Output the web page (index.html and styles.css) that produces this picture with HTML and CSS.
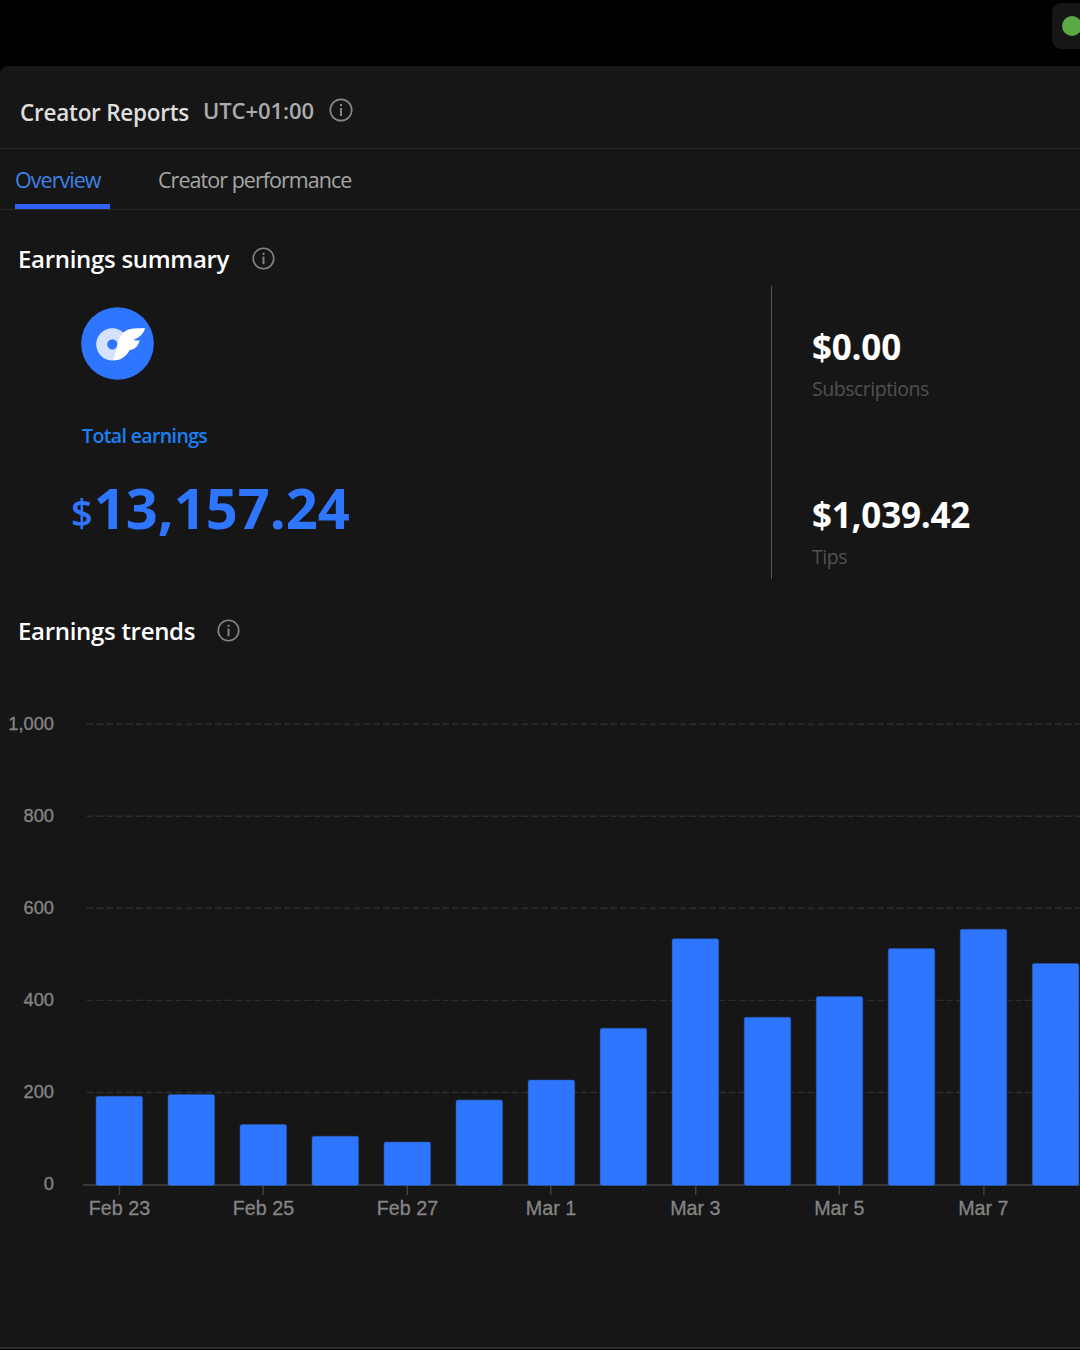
FILE: index.html
```html
<!DOCTYPE html>
<html lang="en">
<head>
  <meta charset="UTF-8" />
  <meta name="viewport" content="width=device-width, initial-scale=1.0"/>
  <title>Creator Reports</title>
  <link rel="stylesheet" href="styles.css">
</head>
<body>

  <svg class="defs" width="0" height="0">
    <symbol id="info" viewBox="0 0 24 24">
      <circle cx="12" cy="12" r="10.7" fill="none" stroke="currentColor" stroke-width="1.7"/>
      <rect x="11" y="6" width="2" height="2.2" fill="currentColor"/>
      <rect x="11" y="10" width="2" height="8" fill="currentColor"/>
    </symbol>
  </svg>

  <div class="topbar">
    <div class="status-pill"><span class="status-dot"></span></div>
  </div>

  <main class="panel">
    <header class="panel-header">
      <h1>Creator Reports</h1>
      <span class="timezone">UTC+01:00</span>
      <svg class="info info-lg"><use href="#info"/></svg>
    </header>

    <nav class="tabs">
      <a class="tab active">Overview</a>
      <a class="tab">Creator performance</a>
    </nav>

    <section class="summary">
      <div class="section-title">
        <h2>Earnings summary</h2>
        <svg class="info"><use href="#info"/></svg>
      </div>
      <div class="summary-body">
        <div class="total">
          <svg class="logo" viewBox="64 51 219 219">
            <circle cx="173.500" cy="160.500" r="109" fill="#2e76ff"/>
            <circle cx="158" cy="163" r="32" fill="none" stroke="#d5e3ff" stroke-width="33"/>
            <path d="M161 211 C166 198 169 180 173 166 C179 140 190 121 212 117 C226 114 240 116 256 114 C253 130 240 143 222 149 C228 152 233 152 240 151 C236 168 226 179 210 180 C202 196 185 212 161 211 Z" fill="#fff"/>
          </svg>
          <p class="total-label">Total earnings</p>
          <p class="total-value"><span class="currency">$</span>13,157.24</p>
        </div>
        <div class="breakdown">
          <div class="stat">
            <p class="stat-value">$0.00</p>
            <p class="stat-label">Subscriptions</p>
          </div>
          <div class="stat">
            <p class="stat-value">$1,039.42</p>
            <p class="stat-label">Tips</p>
          </div>
        </div>
      </div>
    </section>

    <section class="trends">
      <div class="section-title">
        <h2 class="trends-title">Earnings trends</h2>
        <svg class="info"><use href="#info"/></svg>
      </div>
      <svg class="chart" viewBox="0 680 1080 560">
        <g class="grid">
          <path d="M86.500 724.300H1080"/>
          <path d="M86.500 816.300H1080"/>
          <path d="M86.500 908.300H1080"/>
          <path d="M86.500 1000.400H1080"/>
          <path d="M86.500 1092.500H1080"/>
        </g>
        <path class="axis" d="M83 1185H1080"/>
        <path class="ticks" d="M119.500 1185v10M263.100 1185v10M407.300 1185v10M550.800 1185v10M695.700 1185v10M839.200 1185v10M983.900 1185v10"/>
        <g class="bars">
          <rect x="96" y="1096.300" width="46.600" height="89.200" rx="2"/>
          <rect x="168" y="1094.500" width="46.600" height="91" rx="2"/>
          <rect x="240" y="1124.500" width="46.600" height="61" rx="2"/>
          <rect x="312" y="1136.200" width="46.600" height="49.300" rx="2"/>
          <rect x="384" y="1142" width="46.600" height="43.500" rx="2"/>
          <rect x="456" y="1100" width="46.600" height="85.500" rx="2"/>
          <rect x="528.100" y="1080" width="46.600" height="105.500" rx="2"/>
          <rect x="600.100" y="1028.200" width="46.600" height="157.300" rx="2"/>
          <rect x="672.100" y="938.700" width="46.600" height="246.800" rx="2"/>
          <rect x="744.200" y="1017.300" width="46.600" height="168.200" rx="2"/>
          <rect x="816.200" y="996.600" width="46.600" height="188.900" rx="2"/>
          <rect x="888.200" y="948.600" width="46.600" height="236.900" rx="2"/>
          <rect x="960.200" y="929.300" width="46.600" height="256.200" rx="2"/>
          <rect x="1032.300" y="963.500" width="46.600" height="222" rx="2"/>
        </g>
        <g class="y-labels">
          <text x="54" y="729.500">1,000</text>
          <text x="54" y="821.500">800</text>
          <text x="54" y="913.700">600</text>
          <text x="54" y="1005.800">400</text>
          <text x="54" y="1097.700">200</text>
          <text x="54" y="1189.700">0</text>
        </g>
        <g class="x-labels">
          <text x="119.500" y="1215">Feb 23</text>
          <text x="263.500" y="1215">Feb 25</text>
          <text x="407.500" y="1215">Feb 27</text>
          <text x="551" y="1215">Mar 1</text>
          <text x="695.300" y="1215">Mar 3</text>
          <text x="839.300" y="1215">Mar 5</text>
          <text x="983.300" y="1215">Mar 7</text>
        </g>
      </svg>
    </section>
  </main>

</body>
</html>
```

FILE: styles.css
```css
* { box-sizing: border-box; }
body {
  margin: 0;
  height: 1350px;
  overflow: hidden;
  background: #000;
  color: #fff;
  font-family: "Open Sans", "Noto Sans", sans-serif;
}
h1, h2, p { margin: 0; }
svg { display: block; }
.defs { position: absolute; }

.topbar {
  height: 66px;
  padding-top: 3px;
  display: flex;
  justify-content: flex-end;
}
.status-pill {
  width: 28px;
  height: 46px;
  padding-left: 10px;
  display: flex;
  align-items: center;
  background: #161616;
  border-radius: 9px 0 0 9px;
}
.status-dot {
  flex: none;
  width: 20px;
  height: 20px;
  border-radius: 50%;
  background: #5ba945;
}

.panel {
  height: 1283px;
  background: #161616;
  border-top-left-radius: 8px;
  border-bottom: 2px solid #303030;
}
.panel-header {
  height: 83px;
  padding: 6px 0 0 20px;
  display: flex;
  align-items: center;
  border-bottom: 1px solid #292929;
}
.panel-header h1 {
  width: 183px;
  padding-top: 4px;
  font-size: 22.5px;
  font-weight: 600;
  letter-spacing: -0.25px;
  white-space: nowrap;
  color: #dedede;
}
.timezone {
  width: 126px;
  font-size: 22px;
  font-weight: 600;
  letter-spacing: -0.08px;
  color: #acacac;
}
.info { width: 23px; height: 23px; color: #858585; }
.info-lg { width: 24px; height: 24px; }

.tabs {
  height: 61px;
  padding-left: 15px;
  display: flex;
  gap: 48px;
  border-bottom: 1px solid #292929;
}
.tab {
  height: 60px;
  padding-top: 15px;
  font-size: 21.5px;
  line-height: 32px;
  letter-spacing: -0.96px;
  white-space: nowrap;
  color: #a6a6a6;
}
.tab.active {
  width: 95px;
  color: #3d82e4;
  border-bottom: 5px solid #2f62f6;
}

.section-title {
  height: 36px;
  padding-left: 18px;
  display: flex;
  align-items: center;
}
.section-title h2 {
  width: 234px;
  font-size: 24px;
  line-height: 36px;
  font-weight: 600;
  letter-spacing: -0.3px;
  white-space: nowrap;
}
.section-title .trends-title { width: 199px; }
.section-title .info { margin-bottom: 2px; }

.summary { padding-top: 31px; }
.summary-body { height: 293px; margin-top: 9px; display: flex; }
.total { width: 771px; padding: 21px 0 0 81px; }
.logo { width: 73px; height: 73px; }
.total-label {
  margin-top: 41px;
  padding-left: 1px;
  font-size: 19.5px;
  line-height: 30px;
  font-weight: 600;
  letter-spacing: -0.62px;
  color: #1a80f3;
}
.total-value {
  margin: 22px 0 0 -10px;
  font-size: 56px;
  line-height: 68px;
  font-weight: 700;
  color: #2e76ff;
}
.currency {
  margin-right: 1px;
  font-size: 38px;
  font-weight: 600;
  vertical-align: 2px;
}

.breakdown {
  padding: 39px 0 0 40px;
  border-left: 1px solid #555;
}
.stat { height: 168px; }
.stat-value {
  font-size: 35px;
  line-height: 44px;
  font-weight: 700;
  letter-spacing: -0.22px;
}
.stat-label {
  margin-top: 5px;
  font-size: 19.5px;
  line-height: 30px;
  letter-spacing: -0.47px;
  color: #505050;
}

.trends { padding-top: 34px; }
.chart { width: 1080px; height: 560px; margin-top: 31px; }
.grid path { stroke: #2d2d2d; stroke-width: 1.4; stroke-dasharray: 7 2.88; }
.axis { stroke: #434343; stroke-width: 1.5; }
.ticks { fill: none; stroke: #434343; stroke-width: 1.4; }
.bars { fill: #2e76ff; stroke: #2457ad; stroke-width: 0.5; }
.chart text {
  font-family: "Liberation Sans", sans-serif;
  font-size: 18.3px;
  fill: #858585;
  stroke: #858585;
  stroke-width: 0.3;
}
.y-labels { text-anchor: end; }
.x-labels { text-anchor: middle; }
.chart .x-labels text { font-size: 19.7px; }
```
